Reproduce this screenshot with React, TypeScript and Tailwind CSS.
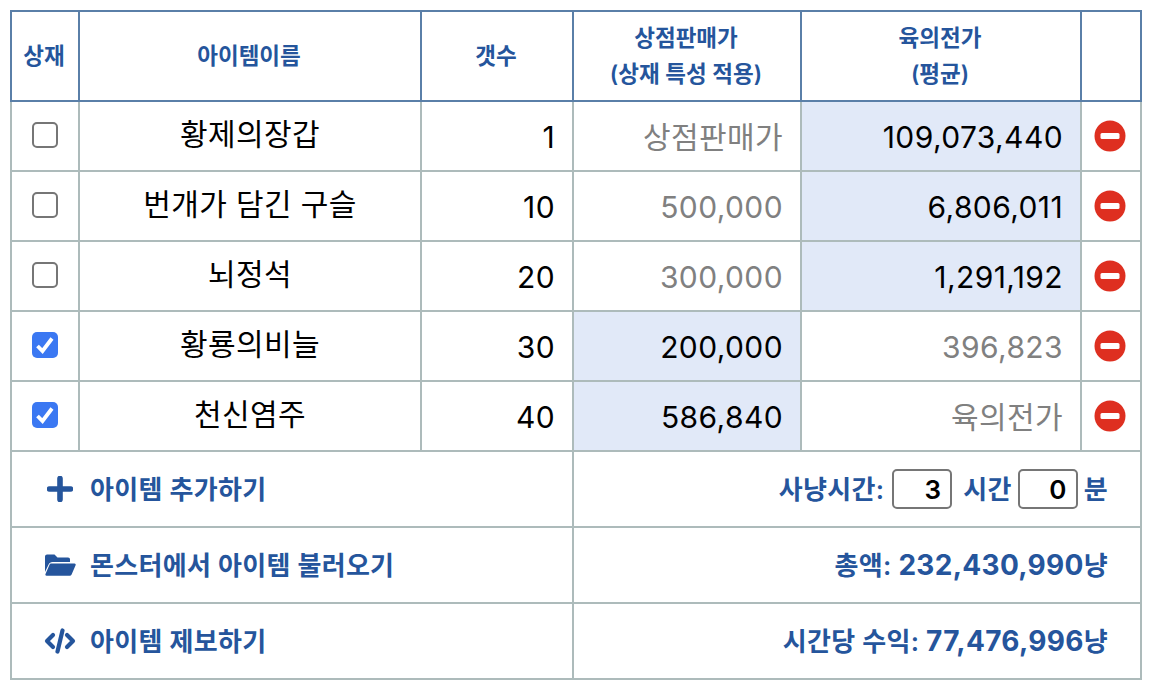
import React from 'react';

const rows = [
  { name: '황제의장갑', count: 1, shop: '상점판매가', shopOn: false, avg: '109,073,440', avgOn: true, checked: false },
  { name: '번개가 담긴 구슬', count: 10, shop: '500,000', shopOn: false, avg: '6,806,011', avgOn: true, checked: false },
  { name: '뇌정석', count: 20, shop: '300,000', shopOn: false, avg: '1,291,192', avgOn: true, checked: false },
  { name: '황룡의비늘', count: 30, shop: '200,000', shopOn: true, avg: '396,823', avgOn: false, checked: true },
  { name: '천신염주', count: 40, shop: '586,840', shopOn: true, avg: '육의전가', avgOn: false, checked: true },
];

function CheckBox({ checked }: { checked: boolean }) {
  if (checked) {
    return (
      <span className="ml-[20px] mb-[3px] flex h-[26px] w-[26px] items-center justify-center rounded-[5px] bg-[#3b78f2]">
        <svg viewBox="0 0 26 26" className="h-[26px] w-[26px]">
          <path d="M5.500 14l5 5 9.500-12.500" fill="none" stroke="#fff" strokeWidth="3.800" />
        </svg>
      </span>
    );
  }
  return <span className="ml-[20px] mb-[3px] block h-[26px] w-[26px] rounded-[5px] border-2 border-[#767676] bg-white" />;
}

function RemoveIcon() {
  return (
    <svg viewBox="0 0 32 32" className="ml-[12px] block h-8 w-8">
      <circle cx="16" cy="16" r="15.500" fill="#de2f20" />
      <rect x="6.500" y="13" width="19" height="6" rx="1.500" fill="#fff" />
    </svg>
  );
}

function PlusIcon() {
  return (
    <svg viewBox="0 0 26 26" className="h-[26px] w-[26px]">
      <path d="M13 2.500v21M2.500 13h21" stroke="#25559c" strokeWidth="5.600" strokeLinecap="round" />
    </svg>
  );
}

function FolderIcon() {
  return (
    <svg viewBox="0 0 32 24" className="h-6 w-8">
      <path d="M1 19V3.500C1 2.200 2 1.500 3 1.500h7.500l3 3H24c1.300 0 2 .9 2 2V9H8.500C6.600 9 5.300 9.900 4.600 11.500L1 19z" fill="#25559c" />
      <path d="M7 10.500h23.500c.9 0 1.500.9 1.100 1.700l-4 9.300c-.4.800-1 1.200-1.900 1.200H2.500c-.9 0-1.400-.9-1-1.700l4-9.300c.3-.8.800-1.200 1.500-1.200z" fill="#25559c" />
    </svg>
  );
}

function CodeIcon() {
  return (
    <svg viewBox="0 0 32 26" className="h-[26px] w-8">
      <path d="M9 7l-6 6 6 6M23 7l6 6-6 6" fill="none" stroke="#25559c" strokeWidth="4.200" strokeLinecap="round" strokeLinejoin="round" />
      <path d="M18.500 2.500L13.500 23.500" fill="none" stroke="#25559c" strokeWidth="4.200" strokeLinecap="round" />
    </svg>
  );
}

function FooterLink({ icon, label }: { icon: React.ReactNode; label: string }) {
  return (
    <div className="flex items-center pl-[32px]">
      <span className="flex w-[32px] justify-center">{icon}</span>
      <span className="ml-[14px]">{label}</span>
    </div>
  );
}

export default function App() {
  const head = 'border-2 border-[#5a7fa8] pr-[2px] text-center align-middle text-[22.5px] font-semibold leading-[36px] text-[#25559c]';
  const cell = 'border-2 border-[#adbbbb] align-middle text-[30px] leading-none tracking-[0.4px]';
  const foot = 'border-2 border-[#adbbbb] align-middle text-[26px] font-semibold tracking-[0.3px] text-[#25559c]';
  const numCell = 'pr-[17px] pt-[2px] text-right';
  const input = 'flex h-10 w-[60px] items-center justify-end rounded-[5px] border-2 border-[#767676] pr-[9px] text-black';

  return (
    <div className="bg-white pl-[10px] pt-[10px] font-['Inter','Noto_Sans_CJK_KR',sans-serif]">
      <table className="w-[1132px] table-fixed border-collapse">
        <colgroup>
          <col className="w-[68px]" />
          <col className="w-[342px]" />
          <col className="w-[152px]" />
          <col className="w-[228px]" />
          <col className="w-[280px]" />
          <col className="w-[60px]" />
        </colgroup>
        <thead>
          <tr className="h-[90px]">
            <th className={head}>상재</th>
            <th className={head}>아이템이름</th>
            <th className={head}>갯수</th>
            <th className={head}>
              상점판매가
              <br />
              (상재 특성 적용)
            </th>
            <th className={head}>
              육의전가
              <br />
              (평균)
            </th>
            <th className={head}></th>
          </tr>
        </thead>
        <tbody>
          {rows.map((r) => (
            <tr key={r.name} className="h-[70px]">
              <td className={cell}>
                <CheckBox checked={r.checked} />
              </td>
              <td className={`${cell} pb-[5px] text-center text-black`}>{r.name}</td>
              <td className={`${cell} ${numCell} text-black`}>{r.count}</td>
              <td className={`${cell} ${numCell} ${r.shopOn ? 'bg-[#e1e9f8] text-black' : 'text-[#808080]'}`}>{r.shop}</td>
              <td className={`${cell} ${numCell} ${r.avgOn ? 'bg-[#e1e9f8] text-black' : 'text-[#808080]'}`}>{r.avg}</td>
              <td className={cell}>
                <RemoveIcon />
              </td>
            </tr>
          ))}
          <tr className="h-[76px]">
            <td colSpan={3} className={foot}>
              <FooterLink icon={<PlusIcon />} label="아이템 추가하기" />
            </td>
            <td colSpan={3} className={`${foot} pr-[32px]`}>
              <div className="flex items-center justify-end">
                <span>사냥시간:</span>
                <span className={`ml-[8px] ${input}`}>3</span>
                <span className="ml-[11px]">시간</span>
                <span className={`ml-[6px] ${input}`}>0</span>
                <span className="ml-[6px]">분</span>
              </div>
            </td>
          </tr>
          <tr className="h-[76px]">
            <td colSpan={3} className={foot}>
              <FooterLink icon={<FolderIcon />} label="몬스터에서 아이템 불러오기" />
            </td>
            <td colSpan={3} className={`${foot} pr-[32px] text-right`}>
              총액: <span className="text-[28px] font-bold">232,430,990</span>냥
            </td>
          </tr>
          <tr className="h-[76px]">
            <td colSpan={3} className={foot}>
              <FooterLink icon={<CodeIcon />} label="아이템 제보하기" />
            </td>
            <td colSpan={3} className={`${foot} pr-[32px] text-right`}>
              시간당 수익: <span className="text-[28px] font-bold">77,476,996</span>냥
            </td>
          </tr>
        </tbody>
      </table>
    </div>
  );
}
